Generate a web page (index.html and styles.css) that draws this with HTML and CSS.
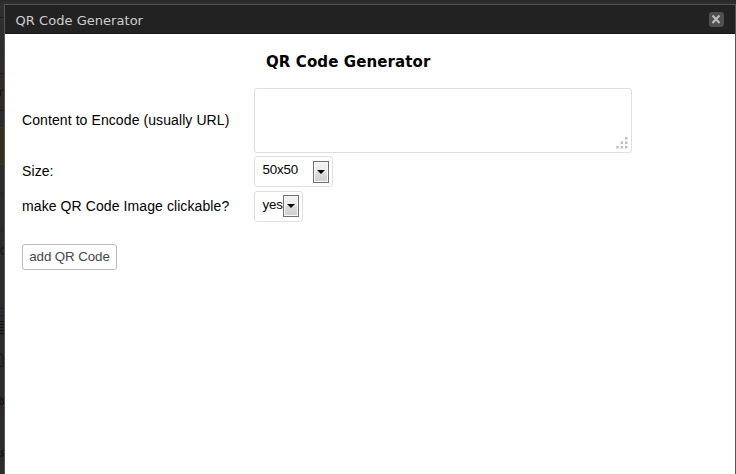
FILE: index.html
```html
<!DOCTYPE html>
<html lang="en">
<head>
<meta charset="utf-8">
<title>QR Code Generator</title>
<link rel="stylesheet" href="styles.css">
</head>
<body>
<div class="backdrop" aria-hidden="true">
  <svg class="page-edge" width="4" height="474" viewBox="0 0 4 474">
    <path d="M0 17.5h4" stroke="#1c1c1c"/>
    <path fill="#302b29" d="M0 73h4v38H0z"/>
    <path d="M0 73.5h4M0 110.5h4" stroke="#4a0c0e"/>
    <path d="M.5 96v-6M1 91q1-1.500 3-1" stroke="#171414" fill="none"/>
    <path fill="#33301f" d="M0 127h4v38H0z"/>
    <path d="M0 127.500h4M0 164.500h4" stroke="#3c371c"/>
    <path d="M0 193.500h4M0 230.500h4" stroke="#242424"/>
    <path d="M4 248q-3-1-3 3t3 3" stroke="#121212" fill="none"/>
    <path fill="#292d31" d="M0 309h4v7H0zM0 340h4v5H0zM0 371h4v7H0z"/>
    <path d="M0 308.500h4M0 315.500h4" stroke="#202326"/>
    <path d="M0 321.500h4M0 324.500h4M0 327.500h4M0 330.500h4M0 333.500h4" stroke="#101010"/>
    <path d="M0 353.500h1l2 3v10H0" stroke="#161616" fill="none"/>
    <path d="M0 397v7h1M4 399q-3-1-2 1l2 2q0 3-3 2" stroke="#0c0c0c" fill="none"/>
    <path d="M0 408.500l1-1 1 1 1-1 1 1" stroke="#5a1515" fill="none"/>
    <path d="M4 451q-3-1-3 1t3 2q0 3-4 2" stroke="#0c0c0c" fill="none"/>
  </svg>
</div>
<main class="dialog">
  <header class="titlebar">
    <span class="title">QR Code Generator</span>
    <button class="close" type="button" aria-label="Close">
      <svg width="15" height="15" viewBox="0 0 15 15"><path d="M3.500 3.500l7 7.500M10.500 3.500l-7 7.500" stroke="#bdbdbd" stroke-width="2"/></svg>
    </button>
  </header>
  <section class="content">
    <h1>QR Code Generator</h1>
    <form class="form">
      <label for="content">Content to Encode (usually URL)</label>
      <div class="textarea" id="content" role="textbox">
        <svg width="12" height="12" viewBox="0 0 12 12" fill="#bdbdbd"><path d="M9 0h2.400v2.400H9zM4.700 4.500h2.400v2.400H4.700zM9 4.500h2.400v2.400H9zM.300 9h2.400v2.400H.300zM4.700 9h2.400v2.400H4.700zM9 9h2.400v2.400H9z"/></svg>
      </div>
      <label>Size:</label>
      <div class="select select-size"><span>50x50</span><i class="arrow"><svg width="8" height="4" viewBox="0 0 8 4"><path d="M0 0h8L4 4z"/></svg></i></div>
      <label>make QR Code Image clickable?</label>
      <div class="select select-click"><span>yes</span><i class="arrow"><svg width="8" height="4" viewBox="0 0 8 4"><path d="M0 0h8L4 4z"/></svg></i></div>
    </form>
    <button class="submit" type="button">add QR Code</button>
  </section>
</main>
</body>
</html>
```

FILE: styles.css
```css
* { box-sizing: border-box; }
body {
  margin: 0;
  height: 474px;
  overflow: hidden;
  padding: 4px 0 0 4px;
  background: #2b2b2b linear-gradient(#292929, #303030 4px, #2b2b2b 60px);
  font-family: "Liberation Sans", Arial, sans-serif;
  font-size: 14px;
  color: #000;
}
.backdrop { position: absolute; left: 0; top: 0; width: 4px; height: 474px; }
.page-edge { display: block; }
.dialog {
  width: 732px;
  height: 470px;
  border: 1px solid #555;
  border-bottom: 0;
  background: #fff;
}
.titlebar {
  display: flex;
  justify-content: space-between;
  height: 29px;
  padding: 0 11px 0 10.500px;
  background: #222;
  border-bottom: 1px solid #1b181b;
}
.title {
  font: 13px/32px "DejaVu Sans", Verdana, sans-serif;
  letter-spacing: 0.040px;
  color: #cfcfcf;
}
.close {
  width: 15px;
  height: 15px;
  margin-top: 7px;
  padding: 0;
  border: 0;
  border-radius: 3px;
  background: #505050;
}
.close svg { display: block; }
.content { padding: 18px 17px 0; }
h1 {
  margin: 0 0 16px 244px;
  font: bold 15px/20px "DejaVu Sans", Verdana, sans-serif;
  letter-spacing: 0.100px;
}
.form {
  display: grid;
  grid-template-columns: 232px auto;
  grid-template-rows: 68px 35px 31px;
  align-items: start;
  justify-items: start;
}
.form label {
  line-height: 31px;
  letter-spacing: 0.090px;
}
.form label:first-child { line-height: 65px; }
.textarea {
  display: flex;
  align-items: flex-end;
  justify-content: flex-end;
  width: 378px;
  height: 65px;
  padding: 0 3px 3px 0;
  border: 1px solid #dfdfdf;
  border-radius: 3px;
}
.select {
  display: flex;
  justify-content: space-between;
  height: 31px;
  padding: 4px 3px 0 7.500px;
  border: 1px solid #dfdfdf;
  border-radius: 3px;
  font-size: 13.333px;
  letter-spacing: -0.150px;
  line-height: 18px;
}
.select-size { width: 79px; }
.select-click {
  width: 49px;
  padding-top: 3px;
  line-height: 20px;
}
.arrow {
  display: flex;
  flex: none;
  align-items: center;
  justify-content: center;
  width: 16px;
  height: 22px;
  border: 1px solid #707070;
  box-shadow: inset 0 0 0 1px #f8f8f8;
  background: linear-gradient(#f2f2f2, #ebebeb 50%, #ddd 50%, #cfcfcf);
}
.submit {
  display: block;
  width: 95px;
  height: 26px;
  margin-top: 22px;
  padding: 0;
  border: 1px solid #bbb;
  border-radius: 3px;
  background: #fff;
  color: #464646;
  font: 13.333px/24px "Liberation Sans", Arial, sans-serif;
  letter-spacing: -0.100px;
}
```
